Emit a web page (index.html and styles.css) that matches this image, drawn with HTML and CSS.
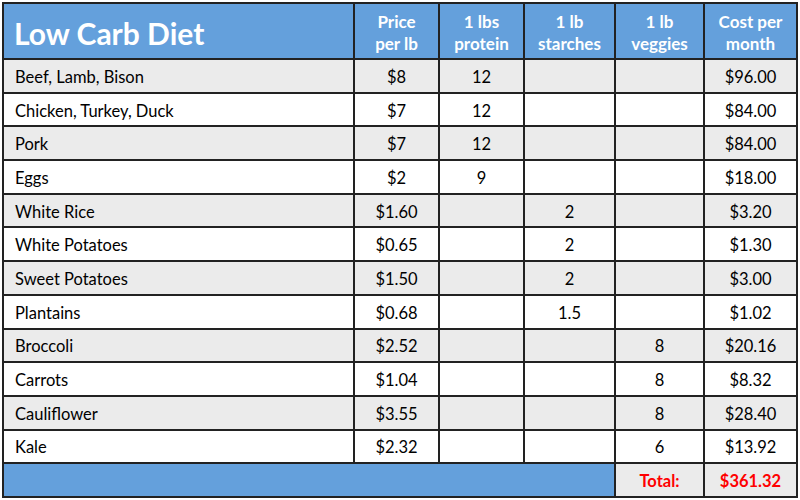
FILE: index.html
```html
<!DOCTYPE html>
<html>
<head>
<meta charset="utf-8">
<link rel="stylesheet" href="styles.css">
</head>
<body>
<table class="diet">
  <colgroup>
    <col class="c-name"><col class="c-price"><col class="c-prot"><col class="c-starch"><col class="c-veg"><col class="c-cost">
  </colgroup>
  <thead>
    <tr class="head">
      <th class="title">Low Carb Diet</th>
      <th>Price<br>per lb</th>
      <th>1 lbs<br>protein</th>
      <th>1 lb<br>starches</th>
      <th>1 lb<br>veggies</th>
      <th>Cost per<br>month</th>
    </tr>
  </thead>
  <tbody>
    <tr class="alt"><td class="name">Beef, Lamb, Bison</td><td>$8</td><td>12</td><td></td><td></td><td>$96.00</td></tr>
    <tr><td class="name">Chicken, Turkey, Duck</td><td>$7</td><td>12</td><td></td><td></td><td>$84.00</td></tr>
    <tr class="alt"><td class="name">Pork</td><td>$7</td><td>12</td><td></td><td></td><td>$84.00</td></tr>
    <tr><td class="name">Eggs</td><td>$2</td><td>9</td><td></td><td></td><td>$18.00</td></tr>
    <tr class="alt"><td class="name">White Rice</td><td>$1.60</td><td></td><td>2</td><td></td><td>$3.20</td></tr>
    <tr><td class="name">White Potatoes</td><td>$0.65</td><td></td><td>2</td><td></td><td>$1.30</td></tr>
    <tr class="alt"><td class="name">Sweet Potatoes</td><td>$1.50</td><td></td><td>2</td><td></td><td>$3.00</td></tr>
    <tr><td class="name">Plantains</td><td>$0.68</td><td></td><td>1.5</td><td></td><td>$1.02</td></tr>
    <tr class="alt"><td class="name">Broccoli</td><td>$2.52</td><td></td><td></td><td>8</td><td>$20.16</td></tr>
    <tr><td class="name">Carrots</td><td>$1.04</td><td></td><td></td><td>8</td><td>$8.32</td></tr>
    <tr class="alt"><td class="name">Cauliflower</td><td>$3.55</td><td></td><td></td><td>8</td><td>$28.40</td></tr>
    <tr><td class="name">Kale</td><td>$2.32</td><td></td><td></td><td>6</td><td>$13.92</td></tr>
  </tbody>
  <tfoot>
    <tr class="foot">
      <td class="fill" colspan="4"></td>
      <td class="total">Total:</td>
      <td class="total">$361.32</td>
    </tr>
  </tfoot>
</table>
</body>
</html>
```
FILE: styles.css
```css
html, body {
  margin: 0;
  padding: 0;
  background: #ffffff;
}
body {
  font-family: "Lato", "Open Sans", sans-serif;
  color: #000;
}
.diet {
  margin: 2px 0 0 2px;
  width: 794px;
  border-collapse: collapse;
  table-layout: fixed;
  border: 2px solid #222;
}
.c-name { width: 351px; }
.c-price { width: 85px; }
.c-prot { width: 85px; }
.c-starch { width: 91px; }
.c-veg { width: 89px; }
.c-cost { width: 93px; }

.diet th, .diet td {
  border: 2px solid #222;
  padding: 2px 0 0 0;
  text-align: center;
  font-size: 16.5px;
  overflow: hidden;
  white-space: nowrap;
}
.head {
  height: 56px;
  background: #64a0dc;
}
.head th {
  color: #fff;
  font-weight: 700;
  font-size: 17px;
  line-height: 22px;
  padding-top: 3px;
}
.head th.title {
  text-align: left;
  padding-left: 10px;
  font-size: 30px;
  line-height: 36px;
}
tbody tr {
  height: 33.7px;
  background: #ffffff;
}
tbody tr.alt {
  background: #ebebeb;
}
.diet td.name {
  text-align: left;
  padding-left: 11px;
}
.foot {
  height: 34px;
}
.foot .fill {
  background: #64a0dc;
}
.foot .total {
  background: #ebebeb;
  color: #ff0000;
  font-weight: 700;
}
```
